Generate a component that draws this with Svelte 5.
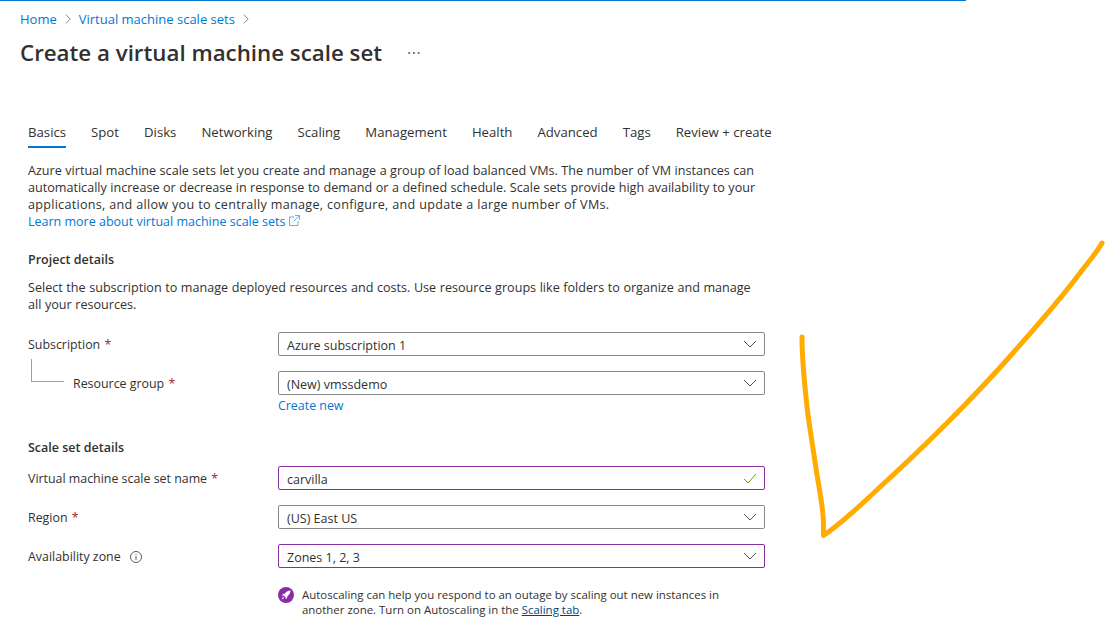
<script>
  const tabs = ["Basics", "Spot", "Disks", "Networking", "Scaling", "Management", "Health", "Advanced", "Tags", "Review + create"];
</script>

{#snippet chevron()}
  <svg class="chevron" width="14" height="8" viewBox="0 0 14 8"><path d="M1 1l6 6 6-6" fill="none" stroke="#555" stroke-width="1" /></svg>
{/snippet}

{#snippet crumbSep()}
  <svg width="6" height="10" viewBox="0 0 6 10"><path d="M.8.6L5.2 5 .8 9.4" fill="none" stroke="#8a8886" stroke-width="1" /></svg>
{/snippet}

<div class="page">
  <header>
    <nav class="crumbs">
      <a href="#home">Home</a>
      {@render crumbSep()}
      <a href="#sets">Virtual machine scale sets</a>
      {@render crumbSep()}
    </nav>
    <div class="title-row">
      <h1>Create a virtual machine scale set</h1>
      <span class="more">···</span>
    </div>
  </header>

  <main>
    <div class="tabs">
      {#each tabs as tab, i}
        <span class="tab" class:active={i === 0}>{tab}</span>
      {/each}
    </div>

    <p class="intro">
      <span class="line">Azure virtual machine scale sets let you create and manage a group of load balanced VMs. The number of VM instances can</span>
      <span class="line">automatically increase or decrease in response to demand or a defined schedule. Scale sets provide high availability to your</span>
      <span class="line wide">applications, and allow you to centrally manage, configure, and update a large number of VMs.</span>
      <a href="#learn" class="learn">Learn more about virtual machine scale sets
        <svg width="11" height="11" viewBox="0 0 11 11" fill="none" stroke="#0078d4" stroke-width="1" opacity="0.6"><path d="M5 2H.5v8.500h8.500V6M6 .5h4.500V5M10.500.5L4.500 6.500" /></svg>
      </a>
    </p>

    <h2 class="project">Project details</h2>
    <p class="desc">Select the subscription to manage deployed resources and costs. Use resource groups like folders to organize and manage all your resources.</p>

    <div class="row">
      <span class="label">Subscription <i>*</i></span>
      <div class="field">Azure subscription 1 {@render chevron()}</div>
    </div>
    <div class="row">
      <span class="label nested"><span class="elbow"></span>Resource group <i>*</i></span>
      <div class="field">(New) vmssdemo {@render chevron()}</div>
    </div>
    <a class="create" href="#new">Create new</a>

    <h2 class="scale">Scale set details</h2>
    <div class="row">
      <span class="label">Virtual machine scale set name <i>*</i></span>
      <div class="field focus">carvilla
        <svg class="check" width="14" height="11" viewBox="0 0 14 11"><path d="M1 6l4 4 8-9" fill="none" stroke="#57a300" stroke-width="1" /></svg>
      </div>
    </div>
    <div class="row">
      <span class="label">Region <i>*</i></span>
      <div class="field">(US) East US {@render chevron()}</div>
    </div>
    <div class="row">
      <span class="label">Availability zone
        <svg class="info" width="12" height="12" viewBox="0 0 12 12"><circle cx="6" cy="6" r="5.500" fill="none" stroke="#605e5c" /><path d="M6 5v4M6 3v1" stroke="#605e5c" fill="none" /></svg>
      </span>
      <div class="field focus">Zones 1, 2, 3 {@render chevron()}</div>
    </div>

    <div class="notice">
      <svg width="16" height="16" viewBox="0 0 16 16">
        <circle cx="8" cy="8" r="8" fill="#8a2da5" />
        <path d="M12.500 3.500c-2.300.1-4.200 1.100-5.500 3L5 7l-1.300 1.500 2-.1 1.900 1.900-.1 2L9 11l.5-2c1.900-1.300 2.900-3.200 3-5.500zM5 9.800L3.500 12.500 6.200 11z" fill="#fff" />
      </svg>
      <p>Autoscaling can help you respond to an outage by scaling out new instances in another zone. Turn on Autoscaling in the <a href="#scaling">Scaling tab</a>.</p>
    </div>
  </main>

  <svg class="scribble" width="1107" height="643" viewBox="0 0 1107 643">
    <path d="M802 337C802 355 804 378 806 397C808 420 812 440 815 462C818 482 822 502 823 515C824 524 823 530 823.500 535.500C842 523 860 506 880 487C902 467 925 445 947 423C969 401 991 378 1013 353C1035 328 1060 300 1080 273C1090 260 1097 252 1102 243" fill="none" stroke="#ffab00" stroke-width="5" stroke-linecap="round" stroke-linejoin="round" />
  </svg>
</div>

<style>
  :global(body) {
    margin: 0;
    background: #fff;
  }
  .page {
    position: relative;
    width: 1107px;
    height: 643px;
    overflow: hidden;
    font-family: "Open Sans", "Noto Sans", sans-serif;
    font-size: 12.400px;
    color: #323130;
  }
  a {
    color: #0078d4;
    text-decoration: none;
  }
  header {
    width: 946px;
    padding: 0 0 0 20px;
    border-top: 1px solid #0078d4;
  }
  .crumbs {
    display: flex;
    align-items: center;
    gap: 8px;
    height: 36px;
    font-size: 13px;
  }
  .title-row {
    display: flex;
    align-items: center;
    height: 32px;
  }
  h1 {
    margin: 0;
    font-size: 22.300px;
    font-weight: 600;
    line-height: 32px;
  }
  .more {
    margin-left: 25px;
    font-size: 16px;
    letter-spacing: 0.5px;
    color: #605e5c;
  }
  main {
    width: 737px;
    padding: 0 0 0 28px;
  }
  .tabs {
    display: flex;
    gap: 25px;
    margin-top: 49px;
    height: 31px;
    white-space: nowrap;
  }
  .tab {
    height: 28px;
    line-height: 28px;
    font-size: 13.200px;
  }
  .active {
    border-bottom: 2px solid #0078d4;
  }
  .intro {
    margin: 13px 0 0;
    line-height: 17px;
    font-size: 12.600px;
    white-space: nowrap;
  }
  .line {
    display: block;
    word-spacing: 0.2px;
  }
  .wide {
    letter-spacing: 0.27px;
  }
  .learn {
    display: block;
    font-size: 12.500px;
  }
  h2 {
    margin: 0;
    font-size: 12.500px;
    font-weight: 600;
    line-height: 18px;
  }
  .project {
    margin-top: 21px;
  }
  .desc {
    width: 728px;
    margin: 10px 0 0;
    font-size: 12.600px;
    line-height: 17px;
    word-spacing: 0.3px;
  }
  .row {
    display: grid;
    grid-template-columns: 250px 487px;
    align-items: center;
    margin-bottom: 15px;
  }
  .desc + .row {
    margin-top: 19px;
  }
  .label {
    position: relative;
  }
  .label i {
    font-style: normal;
    color: #a4262c;
    margin-left: 1px;
  }
  .nested {
    padding-left: 45px;
  }
  .elbow {
    position: absolute;
    left: 3px;
    top: -16px;
    width: 32px;
    height: 22px;
    border-left: 1px solid #a19f9d;
    border-bottom: 1px solid #a19f9d;
  }
  .field {
    display: flex;
    align-items: center;
    justify-content: space-between;
    box-sizing: border-box;
    height: 24px;
    padding: 3px 7px 0 8px;
    border: 1px solid #8a8886;
    border-radius: 2px;
    font-size: 12.500px;
    line-height: 19px;
  }
  .field svg {
    margin-top: -3px;
  }
  .focus {
    border-color: #8a2da5;
  }
  .create {
    display: block;
    margin: -14px 0 0 250px;
    line-height: 19px;
  }
  .scale {
    margin-top: 24px;
    margin-bottom: 9px;
  }
  .info {
    margin-left: 6px;
    vertical-align: -2px;
  }
  .notice {
    display: flex;
    gap: 8px;
    margin: 19px 0 0 250px;
    width: 445px;
  }
  .notice svg {
    flex: none;
  }
  .notice p {
    margin: 0;
    font-size: 11.450px;
    line-height: 15px;
  }
  .notice a {
    color: #004578;
    text-decoration: underline;
  }
  .scribble {
    position: absolute;
    left: 0;
    top: 0;
    pointer-events: none;
  }
</style>
